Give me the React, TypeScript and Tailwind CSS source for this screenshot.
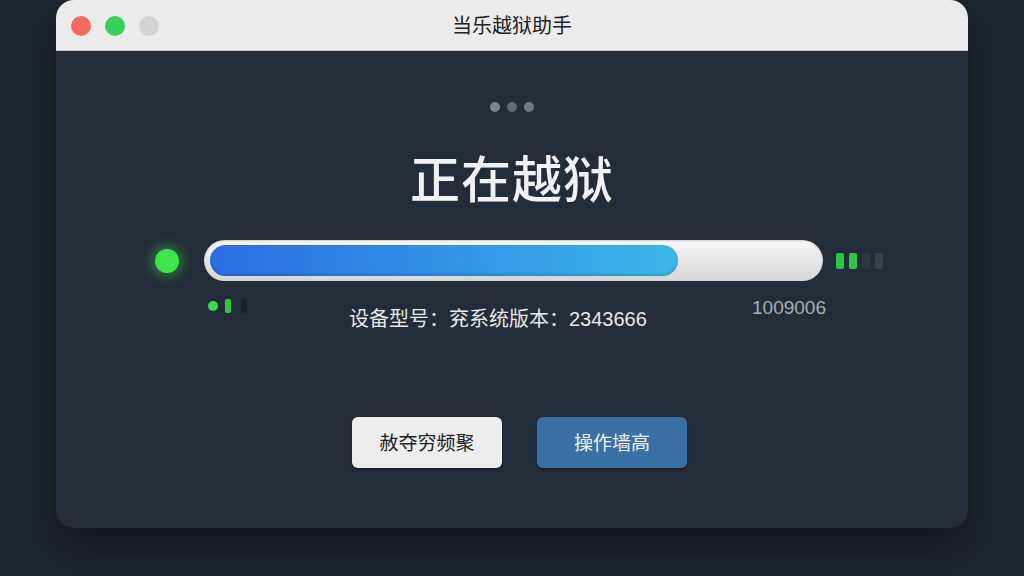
const cjk = { fontFamily: '"Noto Sans CJK SC", "Noto Sans", sans-serif' };

const TrafficLights = () => (
  <div className="absolute left-[15px] top-[16px] flex gap-[14px]">
    <span className="h-[20px] w-[20px] rounded-full bg-[#f26b5f]" />
    <span className="h-[20px] w-[20px] rounded-full bg-[#35d15a]" />
    <span className="h-[20px] w-[20px] rounded-full bg-[#d3d3d3]" />
  </div>
);

const SignalBars = () => (
  <div className="flex items-center gap-[5px]">
    <span className="h-[16px] w-[8px] rounded-[2px] bg-[#2ec648]" />
    <span className="h-[16px] w-[8px] rounded-[2px] bg-[#2ec648]" />
    <span className="h-[16px] w-[8px] rounded-[2px] bg-[#2d3744]" />
    <span className="h-[16px] w-[8px] rounded-[2px] bg-[#37414e]" />
  </div>
);

export default function App() {
  const progress = 77.1;

  return (
    <div className="min-h-[576px] w-[1024px] bg-[#1e2731] pl-[56px] pt-0" style={cjk}>
      <div className="flex h-[528px] w-[912px] flex-col overflow-hidden rounded-[18px] bg-[#232d39] shadow-[0_20px_40px_rgba(0,0,0,0.45)]">
        {/* title bar */}
        <div className="relative flex h-[51px] shrink-0 items-center justify-center border-b border-[#c9c9c9] bg-[#ebebeb]">
          <TrafficLights />
          <span className="text-[20px] text-[#222]">当乐越狱助手</span>
        </div>

        <div className="flex flex-1 flex-col">
          <div className="mt-[51px] flex justify-center gap-[7px]">
            <span className="h-[10px] w-[10px] rounded-full bg-[#7d8591]" />
            <span className="h-[10px] w-[10px] rounded-full bg-[#636b77]" />
            <span className="h-[10px] w-[10px] rounded-full bg-[#717985]" />
          </div>

          <h1 className="mt-[34px] text-center text-[50px] font-medium leading-[60px] tracking-[1px] text-[#f1f1f1]">
            正在越狱
          </h1>

          {/* progress */}
          <div className="ml-[99px] mt-[34px] flex items-center">
            <span className="h-[24px] w-[24px] rounded-full bg-[#3ee54a] shadow-[0_0_12px_3px_rgba(62,229,74,0.45)]" />
            <div className="ml-[25px] flex h-[41px] w-[619px] items-center rounded-full bg-gradient-to-b from-[#fafafa] via-[#e6e6e6] to-[#d6d6d6] px-[6px] shadow-[inset_0_1px_2px_rgba(0,0,0,0.2)]">
              <div
                className="h-[31px] rounded-full bg-gradient-to-r from-[#2b6ee0] via-[#3391e6] to-[#3cb7e8] shadow-[inset_0_-2px_3px_rgba(0,0,0,0.15)]"
                style={{ width: `${progress}%` }}
              />
            </div>
            <div className="ml-[13px]">
              <SignalBars />
            </div>
          </div>

          <div className="ml-[150px] mt-[17px] flex w-[619px] items-start">
            <div className="mt-[1px] flex items-center gap-[7px] pl-[2px]">
              <span className="h-[10px] w-[10px] rounded-full bg-[#3bdc45]" />
              <span className="h-[14px] w-[6px] rounded-[2px] bg-[#2ec648]" />
              <span className="ml-[3px] h-[14px] w-[6px] rounded-[2px] bg-[#19212b]" />
            </div>
            <p className="ml-[102px] mt-[8px] text-[20px] leading-[24px] text-[#e8e8e8]">
              设备型号：兖系统版本：<span style={{ fontFamily: '"Liberation Sans", sans-serif' }}>2343666</span>
            </p>
            <span
              className="ml-auto mr-[-1px] text-[19px] leading-[20px] text-[#a7adb5]"
              style={{ fontFamily: '"Liberation Sans", sans-serif' }}
            >
              1009006
            </span>
          </div>

          {/* actions */}
          <div className="ml-[296px] mt-[86px] flex gap-[35px]">
            <button className="flex h-[51px] w-[150px] items-center justify-center rounded-[6px] bg-[#ededed] text-[19px] text-[#222] shadow-[0_2px_3px_rgba(0,0,0,0.35)]">
              赦夺穷频聚
            </button>
            <button className="flex h-[51px] w-[150px] items-center justify-center rounded-[6px] bg-[#3a70a5] text-[19px] text-[#eef2f6] shadow-[0_2px_3px_rgba(0,0,0,0.3)]">
              操作墙高
            </button>
          </div>
        </div>
      </div>
    </div>
  );
}
